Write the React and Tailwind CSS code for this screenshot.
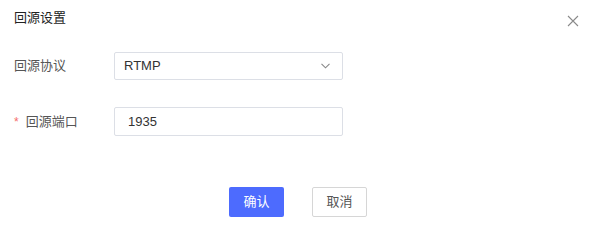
import React from "react";

export default function App() {
  return (
    <div className="w-[595px] h-[243px] bg-white relative" style={{ fontFamily: '"Liberation Sans", "Noto Sans CJK SC", sans-serif' }}>
      <div className="flex items-start justify-between pl-[14px] pr-[16px] pt-[8px]">
        <span className="text-[13px] leading-[20px] text-[#222]">回源设置</span>
        <svg className="mt-[7px]" width="12" height="12" viewBox="0 0 12 12">
          <path d="M1 1 L11 11 M11 1 L1 11" stroke="#8a8a8a" strokeWidth="1.1" fill="none" />
        </svg>
      </div>

      <div className="flex flex-col gap-[27px] mt-[24px] pl-[14px]">
        <div className="flex items-center">
          <span className="w-[100px] text-[13px] text-[#555]">回源协议</span>
          <div className="w-[229px] h-[28px] border border-[#dcdfe6] rounded-[2px] flex items-center justify-between pl-[9px] pr-[12px]">
            <span className="text-[13px] text-[#333]">RTMP</span>
            <svg width="9" height="6" viewBox="0 0 9 6">
              <path d="M0.5 0.8 L4.5 4.8 L8.5 0.8" stroke="#888" strokeWidth="1.1" fill="none" />
            </svg>
          </div>
        </div>
        <div className="flex items-center">
          <span className="w-[100px] text-[13px] text-[#555] flex items-center">
            <span className="text-[#f56c6c] mr-[7px] text-[12px]">*</span>
            回源端口
          </span>
          <div className="w-[229px] h-[29px] border border-[#dcdfe6] rounded-[2px] flex items-center pl-[13px]">
            <span className="text-[13px] text-[#333]">1935</span>
          </div>
        </div>
      </div>

      <div className="flex gap-[28px] mt-[51px] pl-[229px]">
        <button className="w-[55px] h-[30px] rounded-[2px] bg-[#4d6bfe] text-white text-[13px]">确认</button>
        <button className="w-[55px] h-[30px] rounded-[2px] border border-[#d6d6d6] bg-white text-[#555] text-[13px]">取消</button>
      </div>
    </div>
  );
}
